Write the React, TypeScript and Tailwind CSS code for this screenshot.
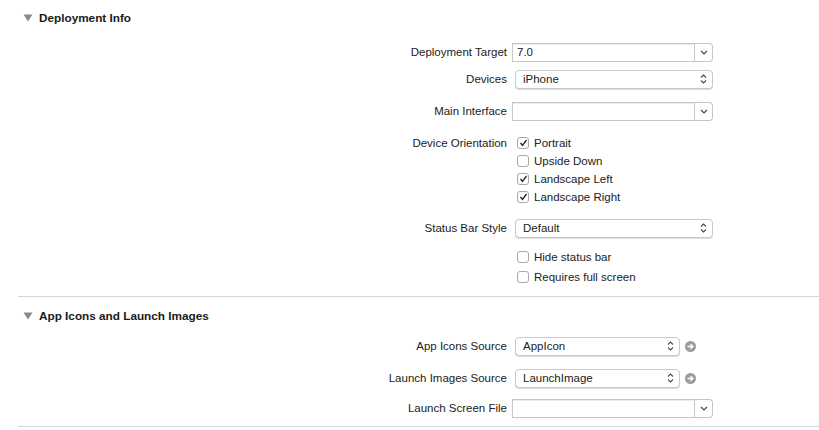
import type { ReactNode } from "react";

function Triangle() {
  return (
    <svg width="10" height="8" viewBox="0 0 10 8" className="shrink-0">
      <path d="M0.5 0.5 L9.5 0.5 L5 7.5 Z" fill="#8a8a8a" />
    </svg>
  );
}

function ChevronDown() {
  return (
    <svg width="8" height="5" viewBox="0 0 8 5">
      <path d="M1 1 L4 4 L7 1" fill="none" stroke="#4a4a4a" strokeWidth="1.2" />
    </svg>
  );
}

function UpDown() {
  return (
    <svg width="7" height="10" viewBox="0 0 7 10">
      <path d="M1 3.5 L3.5 1 L6 3.5 M1 6.5 L3.5 9 L6 6.5" fill="none" stroke="#4a4a4a" strokeWidth="1.1" />
    </svg>
  );
}

function GoArrow() {
  return (
    <svg width="11" height="11" viewBox="0 0 11 11" className="ml-[5px]">
      <circle cx="5.5" cy="5.5" r="5.5" fill="#9c9c9c" />
      <path d="M2.5 5.5 H7.5 M5.5 3.2 L7.8 5.5 L5.5 7.8" fill="none" stroke="#fff" strokeWidth="1.5" />
    </svg>
  );
}

function SectionHeader({ title }: { title: string }) {
  return (
    <div className="flex h-[18px] items-center pl-[23px]">
      <Triangle />
      <span className="ml-[6px] text-[11.75px] font-bold text-[#1a1a1a]">{title}</span>
    </div>
  );
}

function Row({ label, className, children }: { label?: string; className: string; children: ReactNode }) {
  return (
    <div className={`flex h-[18px] items-center ${className}`}>
      <div className="w-[508px] shrink-0 pr-[1px] pt-[2px] text-right">{label}</div>
      {children}
    </div>
  );
}

function Combo({ value, width }: { value: string; width: number }) {
  return (
    <div className="ml-[4px] flex h-[19px]" style={{ width }}>
      <div className="flex flex-1 items-center border border-[#c6c6c6] bg-white pl-[4px] pt-[2px] shadow-[inset_0_1px_0_#ececec]">
        {value}
      </div>
      <div className="flex w-[18px] items-center justify-center rounded-r-[4px] border border-l-0 border-[#c6c6c6] bg-white">
        <ChevronDown />
      </div>
    </div>
  );
}

function Popup({ value, width, arrow }: { value: string; width: number; arrow?: boolean }) {
  return (
    <div className="flex items-center">
      <div
        className="ml-[7px] flex h-[19px] items-center justify-between rounded-[4px] border border-[#c9c9c9] bg-white pl-[7px] pr-[5px] shadow-[0_1px_0_#dcdcdc]"
        style={{ width }}
      >
        <span className="pt-[2px]">{value}</span>
        <UpDown />
      </div>
      {arrow ? <GoArrow /> : null}
    </div>
  );
}

function Check({ label, checked }: { label: string; checked?: boolean }) {
  return (
    <div className="ml-[9px] flex items-center">
      <div className="flex h-[12px] w-[12px] items-center justify-center rounded-[3px] border border-[#a9a9a9] bg-white">
        {checked ? (
          <svg width="9" height="8" viewBox="0 0 9 8">
            <path d="M1.5 4 L3.5 6.3 L7.5 1" fill="none" stroke="#2a2a2a" strokeWidth="1.4" />
          </svg>
        ) : null}
      </div>
      <span className="ml-[5px] pt-[2px]">{label}</span>
    </div>
  );
}

export default function App() {
  return (
    <div
      className="h-[430px] w-[819px] overflow-hidden bg-white pt-[9px] text-[11.5px] text-[#222222]"
      style={{ fontFamily: '"Liberation Sans", Arial, sans-serif' }}
    >
      <SectionHeader title="Deployment Info" />
      <Row label="Deployment Target" className="mt-[16px]">
        <Combo value="7.0" width={201} />
      </Row>
      <Row label="Devices" className="mt-[9px]">
        <Popup value="iPhone" width={198} />
      </Row>
      <Row label="Main Interface" className="mt-[14px]">
        <Combo value="" width={201} />
      </Row>
      <Row label="Device Orientation" className="mt-[14px]">
        <Check label="Portrait" checked />
      </Row>
      <Row className="">
        <Check label="Upside Down" />
      </Row>
      <Row className="">
        <Check label="Landscape Left" checked />
      </Row>
      <Row className="">
        <Check label="Landscape Right" checked />
      </Row>
      <Row label="Status Bar Style" className="mt-[13px]">
        <Popup value="Default" width={198} />
      </Row>
      <Row className="mt-[11px]">
        <Check label="Hide status bar" />
      </Row>
      <Row className="mt-[2px]">
        <Check label="Requires full screen" />
      </Row>
      <div className="ml-[18px] mt-[10px] h-px bg-[#d6d6d6]" />

      <div className="mt-[10px]">
        <SectionHeader title="App Icons and Launch Images" />
      </div>
      <Row label="App Icons Source" className="mt-[12px]">
        <Popup value="AppIcon" width={165} arrow />
      </Row>
      <Row label="Launch Images Source" className="mt-[14px]">
        <Popup value="LaunchImage" width={165} arrow />
      </Row>
      <Row label="Launch Screen File" className="mt-[12px]">
        <Combo value="" width={201} />
      </Row>
      <div className="ml-[18px] mt-[9px] h-px bg-[#d6d6d6]" />
    </div>
  );
}
